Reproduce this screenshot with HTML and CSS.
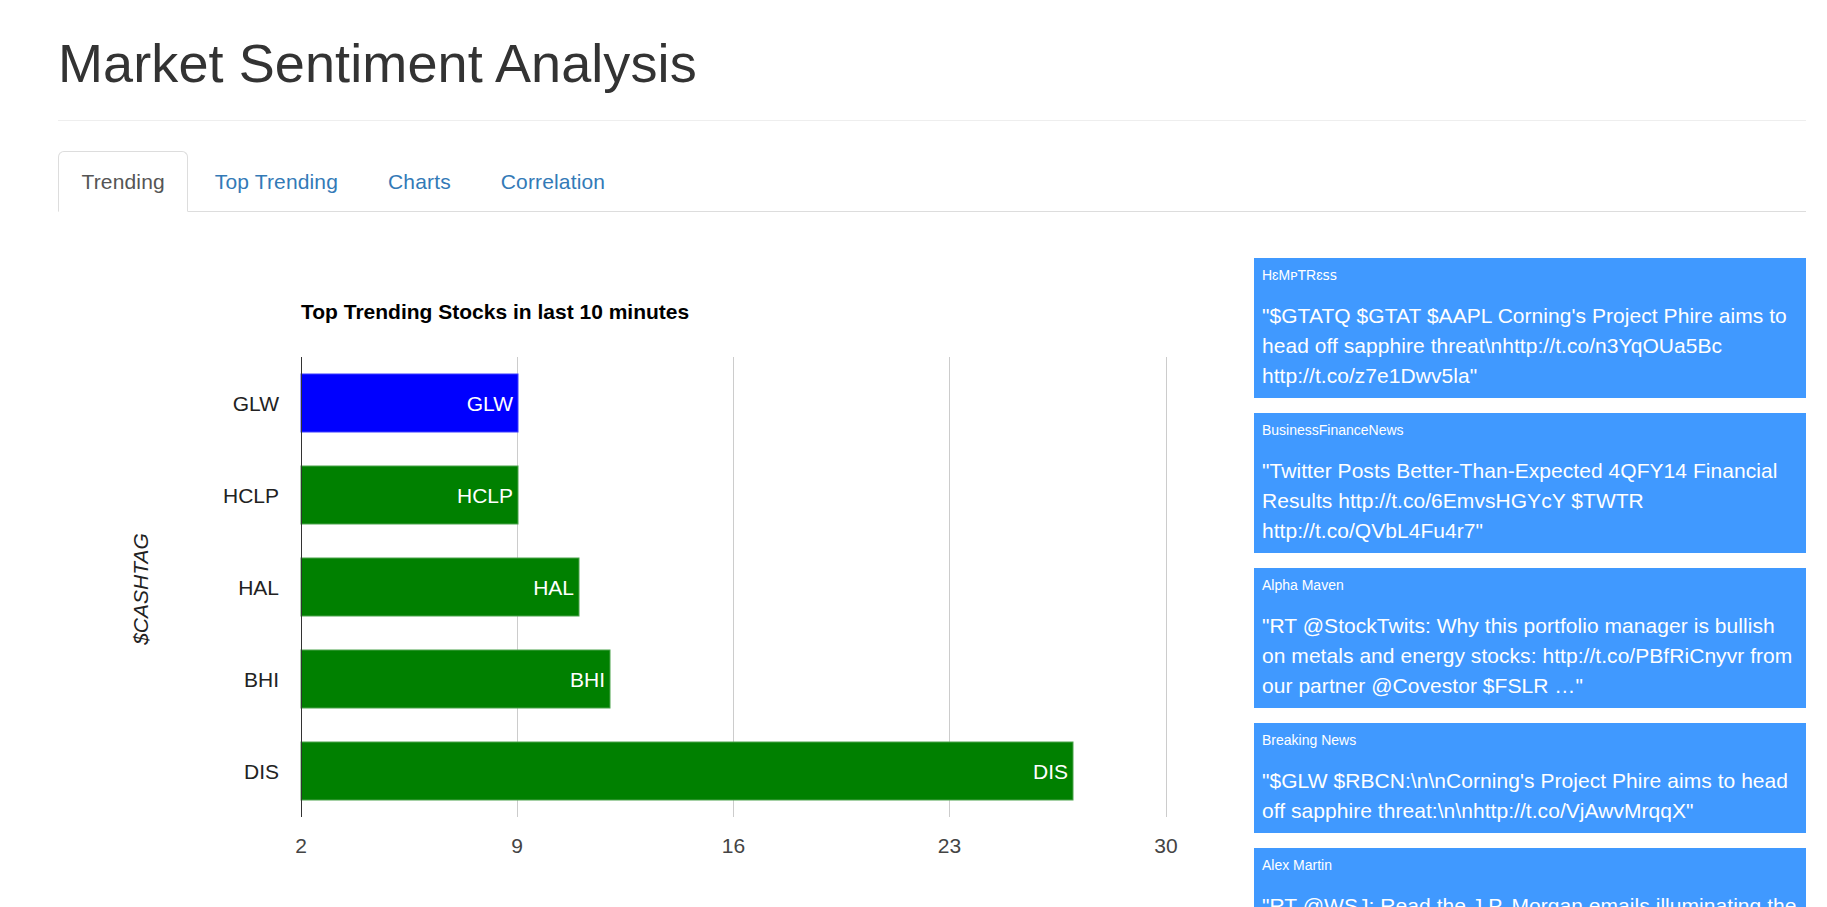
FILE: index.html
```html
<!DOCTYPE html>
<html lang="en">
<head>
<meta charset="utf-8">
<title>Market Sentiment Analysis</title>
<link rel="stylesheet" href="styles.css">
</head>
<body>
<div class="page">
  <header class="page-header">
    <h1>Market Sentiment Analysis</h1>
  </header>

  <ul class="nav-tabs">
    <li class="active"><a href="#trending">Trending</a></li>
    <li><a href="#top">Top Trending</a></li>
    <li><a href="#charts">Charts</a></li>
    <li><a href="#correlation">Correlation</a></li>
  </ul>

  <div class="tab-content">
    <div class="chart-col">
      <svg class="chart" width="1150" height="696" viewBox="0 0 1150 696" xmlns="http://www.w3.org/2000/svg">
        <text class="c-title" x="243" y="107">Top Trending Stocks in last 10 minutes</text>

        <g class="grid">
          <line x1="459.5" y1="145" x2="459.5" y2="605"/>
          <line x1="675.5" y1="145" x2="675.5" y2="605"/>
          <line x1="891.5" y1="145" x2="891.5" y2="605"/>
          <line x1="1108.5" y1="145" x2="1108.5" y2="605"/>
        </g>

        <g class="bars">
          <rect class="bar-blue" x="243" y="162" width="217" height="58"/>
          <rect class="bar-green" x="243" y="254" width="217" height="58"/>
          <rect class="bar-green" x="243" y="346" width="278" height="58"/>
          <rect class="bar-green" x="243" y="438" width="309" height="58"/>
          <rect class="bar-green" x="243" y="530" width="772" height="58"/>
        </g>

        <line class="baseline" x1="243.5" y1="145" x2="243.5" y2="605"/>

        <g class="bar-labels">
          <text x="455" y="198.5">GLW</text>
          <text x="455" y="290.5">HCLP</text>
          <text x="516" y="382.5">HAL</text>
          <text x="547" y="474.5">BHI</text>
          <text x="1010" y="566.5">DIS</text>
        </g>

        <g class="y-labels">
          <text x="221" y="198.5">GLW</text>
          <text x="221" y="290.5">HCLP</text>
          <text x="221" y="382.5">HAL</text>
          <text x="221" y="474.5">BHI</text>
          <text x="221" y="566.5">DIS</text>
        </g>

        <g class="x-labels">
          <text x="243" y="641">2</text>
          <text x="459" y="641">9</text>
          <text x="675.5" y="641">16</text>
          <text x="891.5" y="641">23</text>
          <text x="1108" y="641">30</text>
        </g>

        <text class="y-title" transform="translate(89.5 377) rotate(-90)">$CASHTAG</text>
      </svg>
    </div>

    <aside class="tweets">
      <div class="tweet">
        <div class="tweet-user">HɛMᴘTRɛꜱꜱ</div>
        <p class="tweet-text">"$GTATQ $GTAT $AAPL Corning's Project Phire aims to head off sapphire threat\nhttp://t.co/n3YqOUa5Bc http://t.co/z7e1Dwv5la"</p>
      </div>
      <div class="tweet">
        <div class="tweet-user">BusinessFinanceNews</div>
        <p class="tweet-text">"Twitter Posts Better-Than-Expected 4QFY14 Financial Results http://t.co/6EmvsHGYcY $TWTR http://t.co/QVbL4Fu4r7"</p>
      </div>
      <div class="tweet">
        <div class="tweet-user">Alpha Maven</div>
        <p class="tweet-text">"RT @StockTwits: Why this portfolio manager is bullish on metals and energy stocks: http://t.co/PBfRiCnyvr from our partner @Covestor $FSLR …"</p>
      </div>
      <div class="tweet">
        <div class="tweet-user">Breaking News</div>
        <p class="tweet-text">"$GLW $RBCN:\n\nCorning's Project Phire aims to head off sapphire threat:\n\nhttp://t.co/VjAwvMrqqX"</p>
      </div>
      <div class="tweet">
        <div class="tweet-user">Alex Martin</div>
        <p class="tweet-text">"RT @WSJ: Read the J.P. Morgan emails illuminating the bank's ties to Madoff http://t.co/kQ2mXvT9pL"</p>
      </div>
    </aside>
  </div>
</div>
</body>
</html>
```

FILE: styles.css
```css
* {
  box-sizing: border-box;
}

html, body {
  margin: 0;
  padding: 0;
  background: #fff;
}

body {
  font-family: "Liberation Sans", Arial, "DejaVu Sans", sans-serif;
  font-size: 21px;
  line-height: 30px;
  color: #333;
}

.page {
  padding: 34px 21px 0 58px;
}

.page-header {
  padding-bottom: 13px;
  border-bottom: 1px solid #eee;
  margin-bottom: 30px;
}

.page-header h1 {
  margin: 0 0 14px 0;
  font-size: 54px;
  line-height: 59px;
  font-weight: 400;
  color: #333;
  letter-spacing: 0.1px;
}

.nav-tabs {
  list-style: none;
  margin: 0;
  padding: 0;
  display: flex;
  border-bottom: 1px solid #ddd;
}

.nav-tabs li {
  margin-right: 3px;
  margin-bottom: -1px;
}

.nav-tabs a {
  display: block;
  padding: 15px 22.5px 14px;
  line-height: 30px;
  font-size: 21px;
  letter-spacing: 0.15px;
  color: #337ab7;
  text-decoration: none;
  border: 1px solid transparent;
  border-radius: 6px 6px 0 0;
}

.nav-tabs li.active a {
  color: #555;
  background: #fff;
  border-color: #ddd #ddd transparent;
}

.tab-content {
  display: flex;
  gap: 46px;
  align-items: flex-start;
}

.chart-col {
  flex: 1;
  min-width: 0;
}

.chart {
  display: block;
}

.chart text {
  font-family: "Liberation Sans", Arial, sans-serif;
  font-size: 21px;
  fill: #222;
}

.chart .c-title {
  font-weight: 700;
  fill: #000;
}

.grid line {
  stroke: #ccc;
  stroke-width: 1;
}

.baseline {
  stroke: #333;
  stroke-width: 1;
}

.bar-blue {
  fill: #0000ff;
  stroke: #3d3dff;
  stroke-width: 1;
}

.bar-green {
  fill: #008000;
  stroke: #4da34d;
  stroke-width: 1;
}

.bar-labels text {
  fill: #fff;
  text-anchor: end;
}

.y-labels text {
  text-anchor: end;
}

.x-labels text {
  text-anchor: middle;
  fill: #444;
}

.chart .y-title {
  font-style: italic;
  text-anchor: middle;
}

.tweets {
  width: 552px;
  flex: none;
  margin-top: 46px;
}

.tweet {
  background: #4099ff;
  color: #fff;
  padding: 7px 8px;
  margin-bottom: 15px;
}

.tweet-user {
  font-size: 14px;
  line-height: 20px;
}

.tweet-text {
  margin: 16px 0 0 0;
  font-size: 21px;
  line-height: 30px;
  letter-spacing: 0.05px;
}
```
